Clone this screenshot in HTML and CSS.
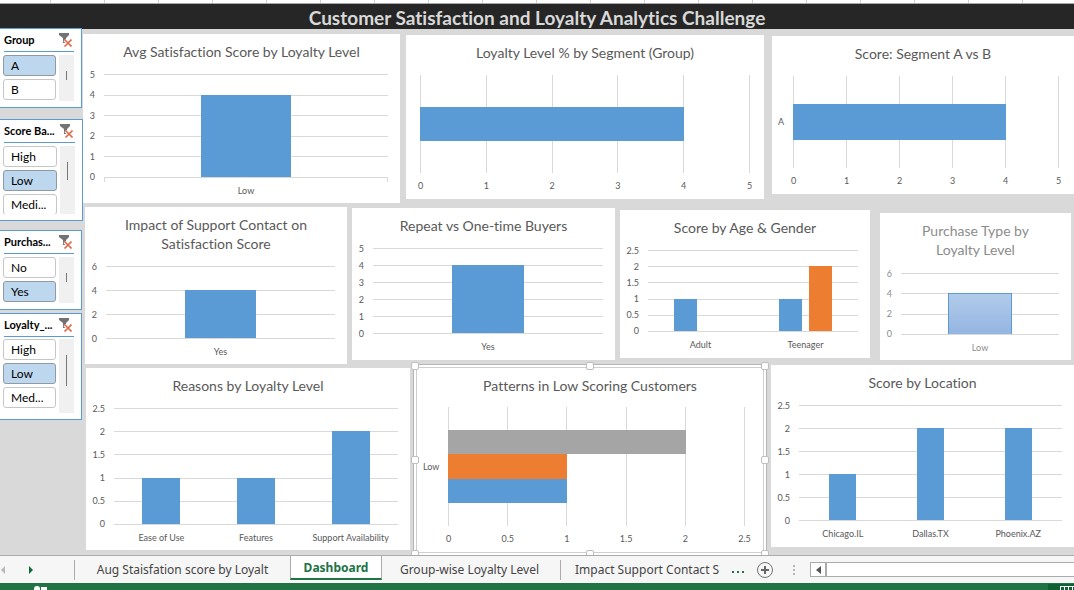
FILE: index.html
```html
<!DOCTYPE html>
<html lang="en">
<head>
<meta charset="utf-8">
<title>Customer Satisfaction and Loyalty Analytics Challenge</title>
<link rel="stylesheet" href="styles.css">
</head>
<body>
<svg class="defs" aria-hidden="true">
  <symbol id="clear-filter" viewBox="0 0 14 14">
    <path d="M1 0h10v2L8 5v5H5V5L1 2z" fill="#737373"/>
    <path d="M6.500 7l6 6M12.500 7l-6 6" stroke="#fff" stroke-width="3"/>
    <path d="M6.500 6.500l7 7M13.500 6.500l-7 7" stroke="#e0694a" stroke-width="1.600"/>
  </symbol>
</svg>

<div class="cells"></div>
<header class="banner"><h1>Customer Satisfaction and Loyalty Analytics Challenge</h1></header>

<div class="sheet">
  <aside class="slicers">
    <section class="slicer slicer-group">
      <header><h3>Group</h3><button class="clear" aria-label="Clear Group filter"><svg><use href="#clear-filter"/></svg></button></header>
      <div class="slicer-body">
        <div class="options"><button class="on">A</button><button>B</button></div>
        <div class="track"><span class="thumb short"></span></div>
      </div>
    </section>
    <section class="slicer slicer-score">
      <header><h3>Score Ba...</h3><button class="clear" aria-label="Clear Score filter"><svg><use href="#clear-filter"/></svg></button></header>
      <div class="slicer-body">
        <div class="options"><button>High</button><button class="on">Low</button><button>Medi...</button></div>
        <div class="track"><span class="thumb medium"></span></div>
      </div>
    </section>
    <section class="slicer slicer-purchase">
      <header><h3>Purchas...</h3><button class="clear" aria-label="Clear Purchase filter"><svg><use href="#clear-filter"/></svg></button></header>
      <div class="slicer-body">
        <div class="options"><button>No</button><button class="on">Yes</button></div>
        <div class="track"><span class="thumb short"></span></div>
      </div>
    </section>
    <section class="slicer slicer-loyalty">
      <header><h3>Loyalty_...</h3><button class="clear" aria-label="Clear Loyalty filter"><svg><use href="#clear-filter"/></svg></button></header>
      <div class="slicer-body">
        <div class="options"><button>High</button><button class="on">Low</button><button>Med...</button></div>
        <div class="track"><span class="thumb long"></span></div>
      </div>
    </section>
  </aside>

  <main class="dashboard">
    <div class="row">
      <section class="chart column avg">
        <h2>Avg Satisfaction Score by Loyalty Level</h2>
        <div class="plot">
          <ol class="y-axis"><li>5</li><li>4</li><li>3</li><li>2</li><li>1</li><li>0</li></ol>
          <div class="area ticks">
            <div class="lines"><i></i><i></i><i></i><i></i><i></i><i></i></div>
            <div class="bars"><div class="cat"><b style="width:31.400%;height:80%"></b></div></div>
          </div>
          <ul class="x-cats"><li>Low</li></ul>
        </div>
      </section>
      <section class="chart bar segment">
        <h2>Loyalty Level % by Segment (Group)</h2>
        <div class="plot">
          <div class="area">
            <div class="lines"><i></i><i></i><i></i><i></i><i></i><i></i></div>
            <div class="bars"><b style="width:80%;height:35.700%"></b></div>
          </div>
          <ol class="x-axis"><li>0</li><li>1</li><li>2</li><li>3</li><li>4</li><li>5</li></ol>
        </div>
      </section>
      <section class="chart bar versus">
        <h2>Score: Segment A vs B</h2>
        <div class="plot">
          <span class="y-cat">A</span>
          <div class="area">
            <div class="lines"><i></i><i></i><i></i><i></i><i></i><i></i></div>
            <div class="bars"><b style="width:80%;height:40%"></b></div>
          </div>
          <ol class="x-axis"><li>0</li><li>1</li><li>2</li><li>3</li><li>4</li><li>5</li></ol>
        </div>
      </section>
    </div>

    <div class="row">
      <section class="chart column support">
        <h2>Impact of Support Contact on<br>Satisfaction Score</h2>
        <div class="plot">
          <ol class="y-axis"><li>6</li><li>4</li><li>2</li><li>0</li></ol>
          <div class="area">
            <div class="lines"><i></i><i></i><i></i><i></i></div>
            <div class="bars"><div class="cat"><b style="width:31.400%;height:66.700%"></b></div></div>
          </div>
          <ul class="x-cats"><li>Yes</li></ul>
        </div>
      </section>
      <section class="chart column repeat">
        <h2>Repeat vs One-time Buyers</h2>
        <div class="plot">
          <ol class="y-axis"><li>5</li><li>4</li><li>3</li><li>2</li><li>1</li><li>0</li></ol>
          <div class="area">
            <div class="lines"><i></i><i></i><i></i><i></i><i></i><i></i></div>
            <div class="bars"><div class="cat"><b style="width:31.400%;height:80%"></b></div></div>
          </div>
          <ul class="x-cats"><li>Yes</li></ul>
        </div>
      </section>
      <section class="chart column age wide-axis">
        <h2>Score by Age &amp; Gender</h2>
        <div class="plot">
          <ol class="y-axis"><li>2.5</li><li>2</li><li>1.5</li><li>1</li><li>0.5</li><li>0</li></ol>
          <div class="area">
            <div class="lines"><i></i><i></i><i></i><i></i><i></i><i></i></div>
            <div class="bars">
              <div class="cat pair"><b style="width:22%;height:40%"></b><b style="width:22%;height:0%"></b></div>
              <div class="cat pair"><b style="width:22%;height:40%"></b><b class="orange" style="width:22%;height:80%"></b></div>
            </div>
          </div>
          <ul class="x-cats"><li>Adult</li><li>Teenager</li></ul>
        </div>
      </section>
      <section class="chart column purchase faded">
        <h2>Purchase Type by<br>Loyalty Level</h2>
        <div class="plot">
          <ol class="y-axis"><li>6</li><li>4</li><li>2</li><li>0</li></ol>
          <div class="area">
            <div class="lines"><i></i><i></i><i></i><i></i></div>
            <div class="bars"><div class="cat"><b class="soft" style="width:40%;height:66.700%"></b></div></div>
          </div>
          <ul class="x-cats"><li>Low</li></ul>
        </div>
      </section>
    </div>

    <div class="row">
      <section class="chart column reasons wide-axis">
        <h2>Reasons by Loyalty Level</h2>
        <div class="plot">
          <ol class="y-axis"><li>2.5</li><li>2</li><li>1.5</li><li>1</li><li>0.5</li><li>0</li></ol>
          <div class="area">
            <div class="lines"><i></i><i></i><i></i><i></i><i></i><i></i></div>
            <div class="bars">
              <div class="cat"><b style="width:40%;height:40%"></b></div>
              <div class="cat"><b style="width:40%;height:40%"></b></div>
              <div class="cat"><b style="width:40%;height:80%"></b></div>
            </div>
          </div>
          <ul class="x-cats"><li>Ease of Use</li><li>Features</li><li>Support Availability</li></ul>
        </div>
      </section>
      <section class="chart bar patterns">
        <div class="frame">
          <h2>Patterns in Low Scoring Customers</h2>
          <div class="plot">
            <span class="y-cat">Low</span>
            <div class="area">
              <div class="lines"><i></i><i></i><i></i><i></i><i></i><i></i></div>
              <div class="bars">
                <b class="gray" style="width:80%;height:20.700%"></b>
                <b class="orange" style="width:40%;height:20.700%"></b>
                <b style="width:40%;height:20.700%"></b>
              </div>
            </div>
            <ol class="x-axis"><li>0</li><li>0.5</li><li>1</li><li>1.5</li><li>2</li><li>2.5</li></ol>
          </div>
        </div>
        <span class="handle nw"></span><span class="handle n"></span><span class="handle ne"></span>
        <span class="handle w"></span><span class="handle e"></span>
        <span class="handle sw"></span><span class="handle s"></span><span class="handle se"></span>
      </section>
      <section class="chart column location wide-axis">
        <h2>Score by Location</h2>
        <div class="plot">
          <ol class="y-axis"><li>2.5</li><li>2</li><li>1.5</li><li>1</li><li>0.5</li><li>0</li></ol>
          <div class="area">
            <div class="lines"><i></i><i></i><i></i><i></i><i></i><i></i></div>
            <div class="bars">
              <div class="cat"><b style="width:31%;height:40%"></b></div>
              <div class="cat"><b style="width:31%;height:80%"></b></div>
              <div class="cat"><b style="width:31%;height:80%"></b></div>
            </div>
          </div>
          <ul class="x-cats"><li>Chicago.IL</li><li>Dallas.TX</li><li>Phoenix.AZ</li></ul>
        </div>
      </section>
    </div>
  </main>
</div>

<nav class="tabbar">
  <div class="arrows">
    <button aria-label="Previous sheets" disabled><svg width="6" height="8" viewBox="0 0 6 8"><path d="M5 0v8L1 4z" fill="#b8b8b8"/></svg></button>
    <button aria-label="Next sheets"><svg width="6" height="8" viewBox="0 0 6 8"><path d="M1 0v8l4-4z" fill="#0e6b39"/></svg></button>
  </div>
  <button class="tab tab-first">Aug Staisfation score by Loyalt</button>
  <button class="tab tab-active">Dashboard</button>
  <button class="tab tab-group">Group-wise Loyalty Level</button>
  <button class="tab tab-impact">Impact Support Contact S</button>
  <button class="more" aria-label="More sheets"><i></i><i></i><i></i></button>
  <button class="add" aria-label="New sheet"><svg width="18" height="18" viewBox="0 0 18 18"><circle cx="9" cy="9" r="7.500" fill="none" stroke="#737373"/><path d="M9 5v8M5 9h8" stroke="#666" stroke-width="2"/></svg></button>
  <span class="grip"><i></i><i></i><i></i></span>
  <div class="scroller">
    <button aria-label="Scroll left"><svg width="5" height="8" viewBox="0 0 5 8"><path d="M5 0v8L0 4z" fill="#555"/></svg></button>
    <span class="bar-thumb"></span>
  </div>
</nav>
<footer class="status">
  <svg class="macro" width="14" height="4" viewBox="0 0 14 4"><circle cx="3" cy="3" r="3" fill="#fff"/><path d="M7 1h6v3H7z" fill="#fff"/></svg>
  <button class="view" aria-label="Normal view"><svg width="14" height="4" viewBox="0 0 14 4"><path d="M0 .500h14M.500 0v4M4.500 0v4M8.500 0v4M12.500 0v4" stroke="#fff"/></svg></button>
</footer>
</body>
</html>
```
FILE: styles.css
```css
* { box-sizing: border-box; }
html, body { height: 100%; }
body {
  margin: 0;
  display: flex;
  flex-direction: column;
  overflow: hidden;
  background: #d9d9d9;
  font-family: Lato, "Liberation Sans", sans-serif;
  font-variant-ligatures: none;
}
button { margin: 0; padding: 0; border: 0; background: none; font: inherit; color: inherit; }
h1, h2, h3, ol, ul { margin: 0; padding: 0; font-weight: normal; list-style: none; }
.defs { display: none; }

/* Spreadsheet edge and banner */
.cells {
  flex: none;
  height: 4px;
  border-bottom: 1px solid #a6a6a6;
  background: linear-gradient(to right, #fff 53px, #d0d0d0 53px) -3px 0 / 54px 100% repeat-x;
}
.banner { flex: none; height: 25px; background: #262626; text-align: center; }
.banner h1 { font-size: 19px; line-height: 27px; font-weight: 700; color: #d9d9d9; }

.sheet { flex: 1; display: flex; min-height: 0; }

/* Slicers */
.slicers { flex: none; width: 83px; margin-top: -1px; z-index: 1; }
.slicer {
  display: flex;
  flex-direction: column;
  margin-right: 1px;
  padding: 0 7px 6px 3px;
  border: 1px solid #5b9bd5;
  border-left: 0;
  background: #fff;
  color: #000;
}
.slicer-group { height: 80px; }
.slicer-score { height: 102px; margin-top: 11px; margin-right: 0; }
.slicer-purchase { height: 80px; margin-top: 9px; }
.slicer-loyalty { height: 107px; margin-top: 3px; }
.slicer header {
  flex: none;
  display: flex;
  justify-content: space-between;
  height: 23px;
  margin-left: 1px;
  padding-right: 2px;
  border-bottom: 1px solid #5b9bd5;
}
.slicer h3 { font-size: 11px; line-height: 22px; font-weight: 700; white-space: nowrap; }
.clear { display: flex; align-items: center; }
.clear svg { width: 14px; height: 14px; }
.slicer-body { flex: 1; display: flex; gap: 3px; min-height: 0; margin-top: 3px; overflow: hidden; }
.slicer-loyalty .slicer-body { margin-top: 2px; }
.options { flex: 1; display: flex; flex-direction: column; gap: 3px; min-width: 0; }
.options button {
  flex: none;
  height: 21px;
  padding-left: 7px;
  border: 1px solid #c6c6c6;
  border-radius: 3px;
  background: #fff;
  font-size: 12px;
  line-height: 18px;
  text-align: left;
}
.options .on { background: #bdd7ee; border-color: #8f9aa3; }
.track { flex: none; width: 15px; background: #f0f0f0; display: flex; justify-content: center; }
.thumb { width: 1px; background: #777; }
.thumb.short { height: 9px; margin-top: 16px; }
.thumb.medium { height: 18px; margin-top: 16px; }
.thumb.long { height: 31px; margin-top: 16px; }

/* Chart grid */
.dashboard {
  flex: 1;
  display: grid;
  grid-template-rows: 169fr 157fr 187fr;
  gap: 4px;
  min-width: 0;
  padding-top: 5px;
}
.row { display: flex; min-height: 0; }
.chart { display: flex; flex-direction: column; min-width: 0; padding-top: 8px; background: #fff; }
.avg { flex: 317; }
.segment { flex: 358; margin: 1px 8px 4px 6px; }
.versus { flex: 302; margin: 2px 0 9px; }
.support { flex: 262; margin-left: 2px; }
.repeat { flex: 263; margin: 1px 5px 4px; }
.age { flex: 250; margin: 3px 10px 6px 0; }
.purchase { flex: 191; margin: 6px 3px 4px 0; }
.reasons { flex: 324; margin: 0 3px 5px; }
.location { flex: 303; margin: -3px 0 8px 4px; }

.chart h2 { font-size: 14px; line-height: 19px; color: #595959; text-align: center; white-space: nowrap; }
.chart.faded h2 { color: #8c8c8c; }

.plot {
  flex: 1;
  display: grid;
  grid-template: 1fr 26px / 21px 1fr;
  min-height: 0;
  margin: 13px 12px 0 0;
  font-size: 9px;
  line-height: 12px;
  color: #595959;
}
.faded .plot { color: #8c8c8c; }
.avg .plot, .support .plot, .purchase .plot, .reasons .plot { grid-template-rows: 1fr 25px; }
.purchase .plot { margin-top: 14px; }
.wide-axis .plot { grid-template-columns: 28px 1fr; }
.y-axis { display: flex; flex-direction: column; justify-content: space-between; padding-right: 9px; }
.y-axis li { height: 1px; display: flex; align-items: center; justify-content: flex-end; }
.area { display: grid; }
.lines, .bars { grid-area: 1 / 1; display: flex; min-height: 0; }
.lines { justify-content: space-between; }
.lines i { background: #d9d9d9; }
.bars b { background: #5b9bd5; }
.bars .orange { background: #ed7d31; }
.bars .gray { background: #a5a5a5; }
.bars .soft { border: 1px solid #5b9bd5; border-bottom: 0; background: linear-gradient(#b1cbe9, #94b5e2); }

.column .lines { flex-direction: column; }
.column .lines i { height: 1px; }
.column .bars { padding-bottom: 1px; }
.cat { flex: 1; display: flex; justify-content: center; align-items: flex-end; }
.pair { gap: 7px; }
.ticks { margin-bottom: -4px; padding-bottom: 4px; background: linear-gradient(#d9d9d9, #d9d9d9) 0 100% / 1px 4px no-repeat, linear-gradient(#d9d9d9, #d9d9d9) 100% 100% / 1px 4px no-repeat; }
.x-cats { grid-column: 2; display: flex; padding-top: 7px; }
.x-cats li { flex: 1; text-align: center; white-space: nowrap; }

.bar .lines i { width: 1px; }
.bar .bars { flex-direction: column; justify-content: center; }
.bar .x-axis { grid-column: 2; display: flex; justify-content: space-between; padding-top: 7px; }
.bar .x-axis li { width: 1px; display: flex; justify-content: center; }
.bar .y-cat { align-self: center; padding-left: 6px; }
.bar .plot { margin-right: 15px; }
.segment .plot { grid-template-columns: 14px 1fr; margin-right: 14px; }
.segment .area { grid-column: 2; }

/* Selected chart with resize handles */
.patterns {
  position: relative;
  flex: 348;
  margin: -4px 0 -1px;
  padding: 2px;
  border: 1px solid #b5b5b5;
}
.frame { flex: 1; display: flex; flex-direction: column; min-height: 0; padding-top: 8px; border: 1px solid #cfcfcf; }
.patterns .plot { grid-template-columns: 31px 1fr; margin: 12px 18px 0 0; }
.handle { position: absolute; width: 8px; height: 8px; border: 1px solid #bfbfbf; border-radius: 2px; background: #fff; }
.nw, .n, .ne { top: -3px; }
.sw, .s, .se { bottom: -3px; }
.nw, .w, .sw { left: -3px; }
.ne, .e, .se { right: -3px; }
.n, .s { left: calc(50% - 4px); }
.w, .e { top: calc(50% - 4px); }

/* Sheet tabs */
.tabbar {
  flex: none;
  z-index: 2;
  display: flex;
  align-items: center;
  height: 28px;
  border-top: 1px solid #ababab;
  background: #f6f6f6;
  font-family: "Noto Sans", "Open Sans", sans-serif;
  font-size: 12px;
  color: #444;
  white-space: nowrap;
}
.arrows { display: flex; gap: 22px; width: 75px; height: 20px; align-items: center; border-right: 1px solid #ababab; }
.arrows button, .scroller button { display: flex; align-items: center; justify-content: center; }
.tab { flex: none; height: 20px; line-height: 18px; text-align: center; }
.tab-first { width: 215px; }
.tab-active {
  align-self: flex-start;
  width: 92px;
  height: 24px;
  line-height: 24px;
  border: 1px solid #ababab;
  border-width: 0 1px 2px;
  border-bottom-color: #217346;
  background: #fff;
  color: #217346;
  font-weight: 700;
}
.tab-group { width: 179px; border-right: 1px solid #ababab; padding-right: 3px; }
.tab-impact { width: 164px; padding-left: 14px; text-align: left; }
.more { display: flex; gap: 3px; margin: 5px 12px 0 7px; }
.more i { width: 2px; height: 2px; background: #217346; }
.add { display: flex; }
.grip { display: flex; flex-direction: column; gap: 2px; margin: 0 15px 0 19px; }
.grip i { width: 2px; height: 2px; background: #b5b5b5; }
.scroller { flex: 1; display: flex; height: 15px; border: 1px solid #ababab; border-right: 0; background: #fff; }
.scroller button { width: 14px; }
.bar-thumb { flex: 1; border-left: 2px solid #ababab; }

.status { flex: none; display: flex; justify-content: space-between; align-items: flex-end; height: 7px; padding-left: 34px; background: #217346; }
.macro, .view svg { display: block; }
.view { height: 6px; padding: 2px 0 0 12px; background: #0f6033; }
```
